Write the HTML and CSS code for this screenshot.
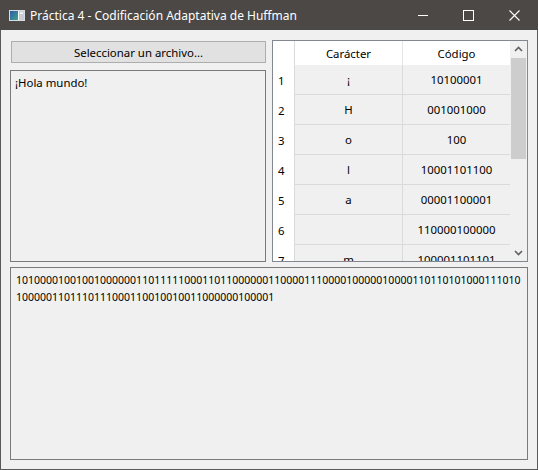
FILE: index.html
```html
<!DOCTYPE html>
<html lang="es">
<head>
<meta charset="utf-8">
<title>Práctica 4 - Codificación Adaptativa de Huffman</title>
<link rel="stylesheet" href="styles.css">
</head>
<body>
<div class="window">
  <div class="titlebar">
    <svg class="app-icon" width="16" height="11" viewBox="0 0 16 11">
      <defs>
        <linearGradient id="g" x1="0" y1="0" x2="1" y2="1">
          <stop offset="0" stop-color="#2f5aa8"/>
          <stop offset="1" stop-color="#3fa58a"/>
        </linearGradient>
      </defs>
      <rect x="0" y="0" width="16" height="11" fill="#d9dde2"/>
      <rect x="1" y="1" width="8" height="9" fill="url(#g)"/>
      <rect x="9" y="1" width="1" height="9" fill="#ffffff"/>
      <rect x="10" y="1" width="5" height="9" fill="#c9ced4"/>
      <rect x="11" y="2" width="3" height="2" fill="#eef0f2"/>
    </svg>
    <span class="title">Práctica 4 - Codificación Adaptativa de Huffman</span>
    <div class="controls">
      <svg class="ctl ctl-min" width="46" height="30" viewBox="0 0 46 30"><rect x="18" y="15" width="10" height="1" fill="#fff"/></svg>
      <svg class="ctl ctl-max" width="46" height="30" viewBox="0 0 46 30"><rect x="17.5" y="10.5" width="10" height="10" fill="none" stroke="#fff" stroke-width="1"/></svg>
      <svg class="ctl ctl-close" width="46" height="30" viewBox="0 0 46 30"><path d="M17.5 10.5 L27.5 20.5 M27.5 10.5 L17.5 20.5" stroke="#fff" stroke-width="1.1" fill="none"/></svg>
    </div>
  </div>
  <div class="content">
    <div class="top">
      <div class="left">
        <div class="button">Seleccionar un archivo...</div>
        <div class="textbox small">¡Hola mundo!</div>
      </div>
      <div class="table">
        <div class="grid">
          <div class="row head">
            <div class="c rh"></div>
            <div class="c c1">Carácter</div>
            <div class="c c2">Código</div>
          </div>
          <div class="row"><div class="c rh">1</div><div class="c c1">¡</div><div class="c c2">10100001</div></div>
          <div class="row"><div class="c rh">2</div><div class="c c1">H</div><div class="c c2">001001000</div></div>
          <div class="row"><div class="c rh">3</div><div class="c c1">o</div><div class="c c2">100</div></div>
          <div class="row"><div class="c rh">4</div><div class="c c1">l</div><div class="c c2">10001101100</div></div>
          <div class="row"><div class="c rh">5</div><div class="c c1">a</div><div class="c c2">00001100001</div></div>
          <div class="row"><div class="c rh">6</div><div class="c c1"></div><div class="c c2">110000100000</div></div>
          <div class="row"><div class="c rh">7</div><div class="c c1">m</div><div class="c c2">100001101101</div></div>
        </div>
        <div class="scrollbar">
          <div class="arrow">
            <svg width="17" height="17" viewBox="0 0 17 17"><path d="M5 10 L8.5 6.5 L12 10" stroke="#606060" stroke-width="1.6" fill="none"/></svg>
          </div>
          <div class="track"><div class="thumb"></div></div>
          <div class="arrow">
            <svg width="17" height="17" viewBox="0 0 17 17"><path d="M5 7 L8.5 10.5 L12 7" stroke="#606060" stroke-width="1.6" fill="none"/></svg>
          </div>
        </div>
      </div>
    </div>
    <div class="textbox big">
      <div class="line">101000010010010000001101111100011011000000110000111000010000010000110110101000111010</div>
      <div class="line">1000001101110111000110010010011000000100001</div>
    </div>
  </div>
</div>
</body>
</html>
```

FILE: styles.css
```css
* { box-sizing: border-box; }
html, body { margin: 0; padding: 0; background: #f0f0f0; }
body {
  font-family: "Noto Sans", "Open Sans", sans-serif;
  font-size: 11.4px;
  color: #000;
}
.window {
  width: 538px;
  height: 470px;
  border: 1px solid #5a5a5a;
  border-top: none;
  display: flex;
  flex-direction: column;
  background: #f0f0f0;
}
.titlebar {
  height: 30px;
  margin: 0 -1px;
  background: #4b4845;
  display: flex;
  align-items: center;
  color: #fff;
  flex: none;
}
.app-icon { margin-left: 9px; margin-top: 1px; flex: none; }
.title { margin-left: 5px; font-size: 12px; white-space: nowrap; }
.controls { margin-left: auto; display: flex; }
.ctl { display: block; }
.content {
  flex: 1;
  padding: 10px 9px 9px 9px;
  display: flex;
  flex-direction: column;
  gap: 5px;
}
.top {
  height: 222px;
  display: flex;
  gap: 6px;
  flex: none;
}
.left {
  width: 256px;
  display: flex;
  flex-direction: column;
}
.button {
  margin: 1px 0 0 1px;
  height: 22px;
  border: 1px solid #adadad;
  background: #e1e1e1;
  display: flex;
  align-items: center;
  justify-content: center;
}
.textbox {
  border: 1px solid #7a7a7a;
  background: #f0f0f0;
}
.textbox.small {
  margin-top: 7px;
  flex: 1;
  padding: 4px 4px;
  line-height: 16px;
}
.textbox.big {
  flex: 1;
  padding: 4px 5px;
  font-size: 10.5px;
  line-height: 17px;
}
.line { white-space: nowrap; }
.table {
  width: 256px;
  border: 1px solid #828790;
  display: flex;
  background: #fff;
}
.grid {
  width: 237px;
  overflow: hidden;
}
.row {
  display: flex;
  height: 30px;
}
.row.head { height: 24px; }
.c {
  display: flex;
  align-items: center;
  justify-content: center;
  white-space: nowrap;
}
.rh {
  width: 22px;
  justify-content: flex-start;
  padding-left: 5px;
  background: #fff;
  border-right: 1px solid #dadada;
}
.c1 {
  width: 108px;
  background: #f0f0f0;
  border-right: 1px solid #dadada;
  border-bottom: 1px solid #dadada;
}
.c2 {
  width: 107px;
  background: #f0f0f0;
  border-bottom: 1px solid #dadada;
}
.head .c1, .head .c2 {
  background: #fff;
  border-bottom: none;
}
.head .c1 { border-right: 1px solid #e5e5e5; }
.scrollbar {
  width: 17px;
  background: #f0f0f0;
  display: flex;
  flex-direction: column;
}
.arrow { height: 17px; flex: none; }
.arrow svg { display: block; }
.track { flex: 1; padding: 0 1px; }
.thumb { height: 101px; background: #cdcdcd; }
```
